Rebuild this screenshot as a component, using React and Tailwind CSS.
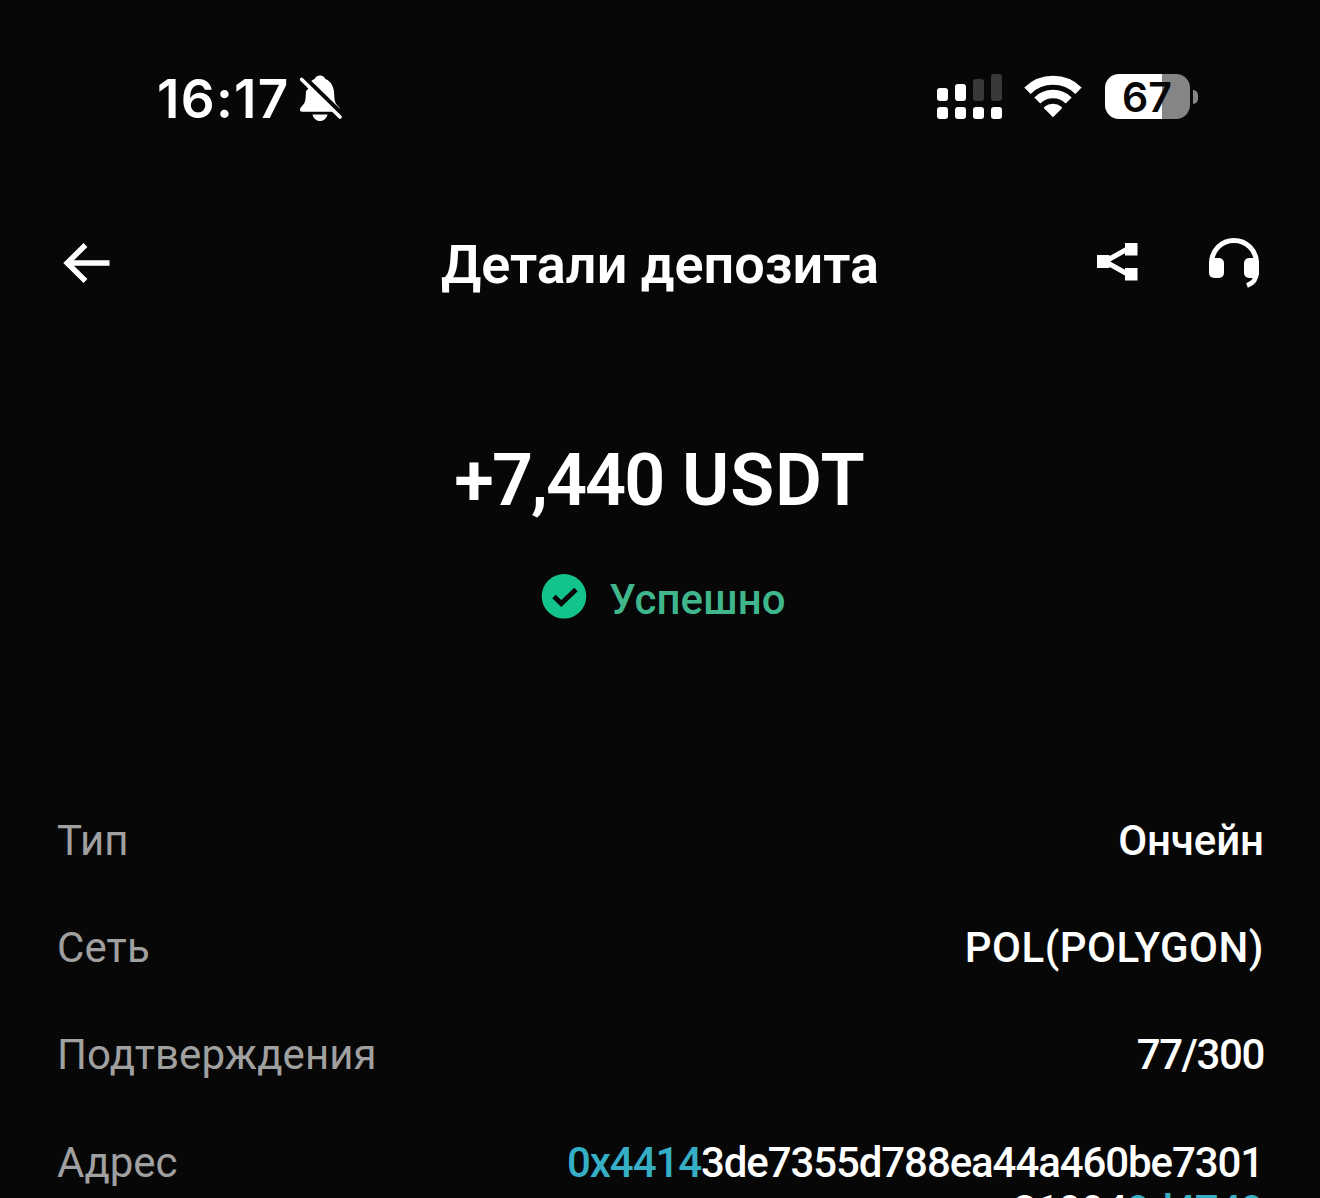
const ROWS = [
  { label: "Тип", value: "Ончейн", spacing: "tracking-[-0.1px]" },
  { label: "Сеть", value: "POL(POLYGON)", spacing: "tracking-[0.5px]" },
  { label: "Подтверждения", value: "77/300", spacing: "tracking-[-1.4px]" },
];

function BellOff() {
  return (
    <svg className="h-[48px] w-[46px]" viewBox="0 0 46 48" fill="#fff">
      <path d="M22 1.500c-2.600 0-4.800 1.500-5.400 3.600C10.500 7.500 8 13.500 7.800 20c-.2 8-1.300 9.500-4.400 12.700C1 35.200 1.800 37.800 5 37.800h34c3.200 0 4-2.600 1.600-5.100C37.500 29.500 36.400 28 36.200 20c-.2-6.500-2.700-12.500-8.800-14.900C26.800 3 24.600 1.500 22 1.500z" />
      <path d="M14.500 40.500h15c-.9 3.900-3.800 6.500-7.500 6.500s-6.600-2.600-7.500-6.500z" />
      <path d="M4 1 46 42" stroke="#070707" strokeWidth="4.500" />
      <path d="M0 8 6 12.500 9.500 15.500" stroke="#070707" strokeWidth="3" fill="none" />
      <path d="M3.700 5.500 42 43" stroke="#fff" strokeWidth="3.600" strokeLinecap="round" />
    </svg>
  );
}

function Signal() {
  return (
    <svg className="h-[46px] w-[66px]" viewBox="0 0 66 46" fill="#fff">
      <rect x="0" y="14" width="11" height="13" rx="3" />
      <rect x="18" y="10" width="11" height="17" rx="3" />
      <rect x="36" y="5" width="11" height="22" rx="3" fill="#383838" />
      <rect x="54" y="0" width="11" height="27" rx="3" fill="#383838" />
      <rect x="0" y="33" width="11" height="12" rx="3" />
      <rect x="18" y="33" width="11" height="12" rx="3" />
      <rect x="36" y="33" width="11" height="12" rx="3" />
      <rect x="54" y="33" width="11" height="12" rx="3" />
    </svg>
  );
}

function Wifi() {
  return (
    <svg className="h-[44px] w-[58px]" viewBox="0 0 58 44" fill="none" stroke="#fff">
      <path d="M3.500 15.700a36.500 36.500 0 0 1 51 0" strokeWidth="9" />
      <path d="M13.300 25.500a22.500 22.500 0 0 1 31.400 0" strokeWidth="8.500" />
      <path d="M29 42.300 20.200 33.400q-.6-.9.300-1.600a13.500 13.500 0 0 1 17 0q.9.700.3 1.600z" fill="#fff" stroke="none" />
    </svg>
  );
}

function Battery() {
  return (
    <div className="flex items-center gap-[3px]">
      <div className="flex h-[45px] w-[85px] items-center justify-center rounded-[14px] bg-[linear-gradient(90deg,#fff_57px,#858585_57px)]">
        <span className="pt-[1px] pr-[1px] font-['Inter'] text-[41px] leading-none font-semibold text-[#070707]">67</span>
      </div>
      <div className="h-[14px] w-[5px] rounded-r-[5px] bg-[#858585]" />
    </div>
  );
}

function BackArrow() {
  return (
    <svg className="h-[42px] w-[48px]" viewBox="0 0 48 42" fill="none" stroke="#fff" strokeWidth="5.500">
      <path d="M22.500 3 4.200 21 22.500 39M5 21h41.500" />
    </svg>
  );
}

function Share() {
  return (
    <svg className="h-[40px] w-[42px]" viewBox="0 0 42 40" fill="#fff">
      <path d="M8 18.500 34 4M8 18.500 34 33" stroke="#fff" strokeWidth="5" />
      <path d="M0 12h12.500v13H0zM28 0h12.500v12.500H28zM28 25h12.500v12.500H28z" />
    </svg>
  );
}

function Headset() {
  return (
    <svg className="h-[52px] w-[52px]" viewBox="0 0 52 52" fill="#fff">
      <path d="M3.500 31V26a22.500 22.500 0 0 1 45 0V34c0 8-2.500 12-9.500 14.500" fill="none" stroke="#fff" strokeWidth="5" />
      <rect x="1" y="21" width="15" height="20" rx="5" />
      <rect x="36" y="21" width="15" height="20" rx="5" />
    </svg>
  );
}

function CheckCircle() {
  return (
    <svg className="h-[46px] w-[46px]" viewBox="0 0 46 46">
      <circle cx="23" cy="22.300" r="22.300" fill="#12c48b" />
      <path d="m13 22.500 7.300 7L35 15.500" fill="none" stroke="#070707" strokeWidth="5" />
    </svg>
  );
}

export default function App() {
  return (
    <div className="h-[1198px] w-[1320px] overflow-hidden bg-[#070707] font-['Roboto',sans-serif] text-white">
      <div className="flex h-[196px] items-center justify-between pr-[122px] pl-[157px]">
        <div className="flex items-center gap-[8px]">
          <span className="pt-[2px] font-['Inter'] text-[53px] leading-none font-semibold tracking-[1.3px]">16:17</span>
          <BellOff />
        </div>
        <div className="flex items-center pb-[3px]">
          <Signal />
          <div className="w-[21px]" />
          <Wifi />
          <div className="w-[23px]" />
          <Battery />
        </div>
      </div>

      <header className="grid h-[134px] grid-cols-[1fr_auto_1fr] items-center pr-[60px] pl-[63px]">
        <BackArrow />
        <h1 className="pt-[4px] pr-[3px] text-[54px] leading-none font-semibold">Детали депозита</h1>
        <div className="flex items-center justify-end gap-[69px]">
          <Share />
          <Headset />
        </div>
      </header>

      <section className="flex h-[457px] flex-col items-center pt-[115px]">
        <div className="text-[72px] leading-[72px] font-semibold">
          <span className="tracking-[-2px]">+7,440</span>
          <span className="tracking-[0.8px]"> USDT</span>
        </div>
        <div className="mt-[56px] flex items-center gap-[22px] pl-[7px]">
          <CheckCircle />
          <span className="pt-[6px] text-[42px] leading-[42px] font-medium tracking-[0.1px] text-[#3fb68b]">Успешно</span>
        </div>
      </section>

      <dl className="pr-[56px] pl-[57px] text-[42px] leading-[50px]">
        {ROWS.map((row) => (
          <div key={row.label} className="flex h-[107px] items-center justify-between">
            <dt className="tracking-[0.1px] text-[#a0a0a0]">{row.label}</dt>
            <dd className={`font-medium ${row.spacing}`}>{row.value}</dd>
          </div>
        ))}
        <div className="flex items-start justify-between pt-[30px]">
          <dt className="text-[#a0a0a0]">Адрес</dt>
          <dd className="pt-[1px] pr-[1px] text-right leading-[48px] font-medium tracking-[-1.1px]">
            <span className="text-[#35aec6]">0x4414</span>3de7355d788ea44a460be7301
            <br />
            81994<span className="text-[#35aec6]">9d4749</span>
          </dd>
        </div>
      </dl>
    </div>
  );
}
